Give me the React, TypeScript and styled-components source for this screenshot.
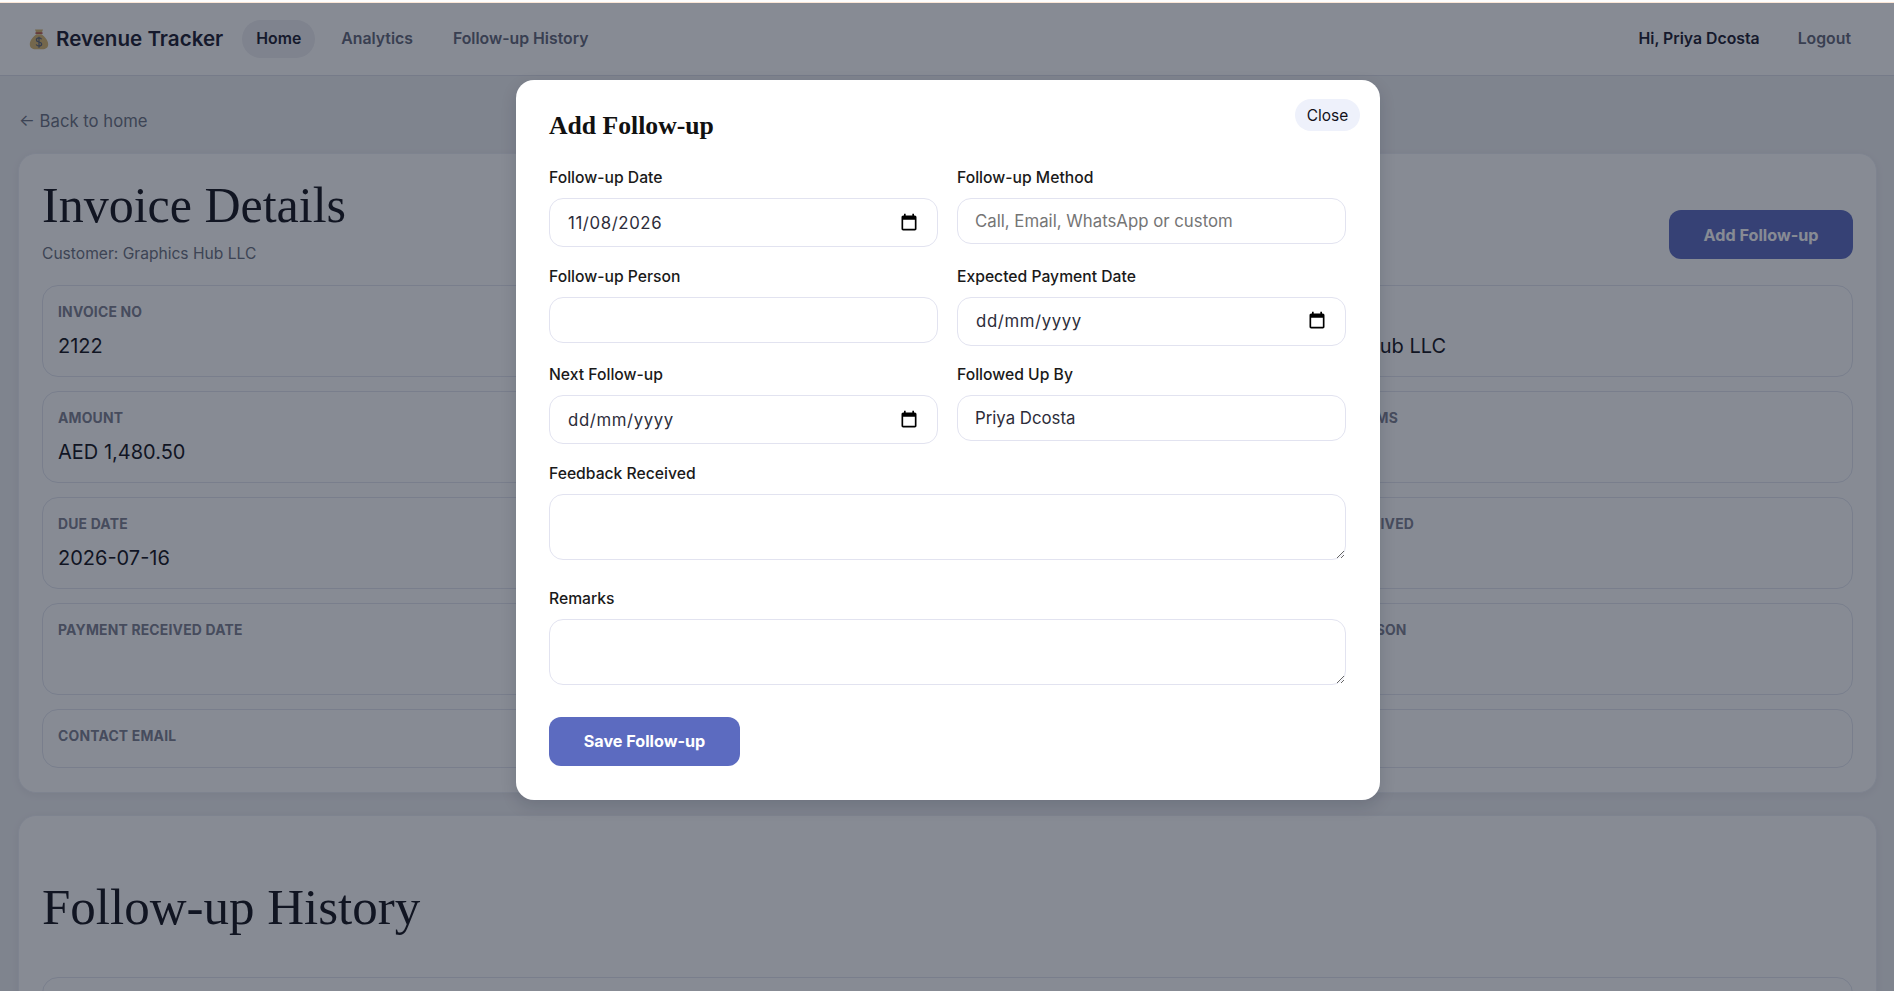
import styled, { createGlobalStyle } from "styled-components";

const GlobalStyle = createGlobalStyle`
    html, body {
        margin: 0;
        height: 100%;
        overflow: hidden;
        background: #eff0f3;
    }
    * {
        box-sizing: border-box;
    }
`;

const sans = `Inter, "Liberation Sans", sans-serif`;
const serif = `"Liberation Serif", "Times New Roman", serif`;

const TopStrip = styled.div`
    height: 3px;
    background: #fdfdfd;
    border-bottom: 1px solid #fbe6d6;
`;

const Page = styled.div`
    position: relative;
    height: 988px;
    overflow: hidden;
    font-family: ${sans};
    color: #12121a;
`;

const Nav = styled.nav`
    height: 73px;
    padding: 0 29px 1px 29px;
    display: flex;
    align-items: center;
    background: #ffffff;
    border-bottom: 1px solid #dcdee8;
`;

const Brand = styled.div`
    display: flex;
    align-items: center;
    gap: 7px;
    margin-right: 19px;
    font-size: 20.6px;
    font-weight: 600;
    color: #1a1a2e;
`;

const NavLinks = styled.div`
    display: flex;
    gap: 12px;
`;

const NavLink = styled.a<{ $active?: boolean }>`
    padding: 0 14px;
    height: 38px;
    display: flex;
    align-items: center;
    border-radius: 19px;
    font-size: 15.8px;
    font-weight: 600;
    color: ${props => (props.$active ? "#1a1a2e" : "#626678")};
    background: ${props => (props.$active ? "#eeeef2" : "transparent")};
`;

const NavRight = styled.div`
    margin-left: auto;
    display: flex;
    align-items: center;
    gap: 24px;
`;

const Greeting = styled.span`
    font-size: 15.8px;
    font-weight: 600;
    color: #1a1a2e;
`;

const Main = styled.main`
    padding: 33px 17px 0 18px;
`;

const BackLink = styled.a`
    display: block;
    height: 24px;
    line-height: 24px;
    margin: 0 0 20px 1px;
    font-size: 16.7px;
    color: #6b7080;
`;

const Card = styled.section`
    background: #ffffff;
    border: 1px solid #eceef5;
    border-radius: 18px;
    padding: 21px 23px 24px 23px;
    box-shadow: 0 2px 8px rgba(26, 26, 46, 0.06);
    & + & {
        margin-top: 22px;
    }
`;

const CardHeader = styled.div`
    display: flex;
    align-items: flex-end;
    justify-content: space-between;
    margin-bottom: 20px;
`;

const PageTitle = styled.h1`
    margin: 0;
    height: 60px;
    font-family: ${serif};
    font-weight: 400;
    font-size: 50px;
    line-height: 60px;
    color: #12121a;
`;

const Customer = styled.p`
    margin: 8px 0 0;
    font-size: 15.6px;
    line-height: 22px;
    color: #6b7080;
`;

const PrimaryButton = styled.button`
    height: 49px;
    border: none;
    border-radius: 12px;
    background: #5c6bc0;
    color: #ffffff;
    font-family: ${sans};
    font-size: 16.2px;
    font-weight: 700;
`;

const HeaderButton = styled(PrimaryButton)`
    width: 184px;
    margin-bottom: 6px;
`;

const InfoGrid = styled.div`
    display: grid;
    grid-template-columns: repeat(3, 1fr);
    gap: 14px;
`;

const InfoBox = styled.div`
    border: 1px solid #e2e5ef;
    border-radius: 16px;
    padding: 16px 15px 14px;
`;

const InfoLabel = styled.div`
    font-size: 13.9px;
    font-weight: 700;
    line-height: 20px;
    text-transform: uppercase;
    letter-spacing: 0.2px;
    color: #7d8090;
`;

const InfoValue = styled.div`
    margin-top: 9px;
    font-size: 20px;
    line-height: 31px;
    color: #12121a;
    &:empty {
        margin-top: 7px;
        line-height: 0;
    }
`;

const HistoryTitle = styled(PageTitle)`
    margin: 40px 0 40px;
    font-size: 51px;
`;

const HistoryBox = styled.div`
    height: 120px;
    border: 1px solid #e2e5ef;
    border-radius: 16px;
`;

const Overlay = styled.div`
    position: absolute;
    inset: 0;
    display: flex;
    justify-content: center;
    padding: 77px 0 0 2px;
    background: rgba(15, 23, 42, 0.5);
`;

const Modal = styled.div`
    position: relative;
    width: 864px;
    height: 720px;
    padding: 29px 34px 34px 33px;
    background: #ffffff;
    border-radius: 18px;
    box-shadow: 0 6px 16px rgba(15, 23, 42, 0.15);
`;

const CloseButton = styled.button`
    position: absolute;
    top: 19px;
    right: 20px;
    width: 65px;
    height: 32px;
    border: none;
    border-radius: 16px;
    background: #eef1fb;
    color: #12121a;
    font-family: ${sans};
    font-size: 15.5px;
`;

const ModalTitle = styled.h2`
    margin: 0 0 24px;
    font-family: ${serif};
    font-size: 25.7px;
    font-weight: 700;
    line-height: 34px;
    color: #111111;
`;

const FormGrid = styled.form`
    display: grid;
    grid-template-columns: 1fr 1fr;
    gap: 18.5px 19px;
`;

const Field = styled.div<{ $wide?: boolean }>`
    display: flex;
    flex-direction: column;
    gap: 9px;
    grid-column: ${props => (props.$wide ? "1 / -1" : "auto")};
`;

const Label = styled.label`
    font-size: 15.7px;
    font-weight: 500;
    line-height: 22px;
    color: #1a1a1a;
`;

const TextInput = styled.input`
    height: 46px;
    padding: 0 17px;
    border: 1px solid #e2e3f0;
    border-radius: 14px;
    outline: none;
    font-family: ${sans};
    font-size: 16.8px;
    color: #2d2d3a;
    background: #ffffff;
    &::placeholder {
        color: #757575;
    }
`;

const DateBox = styled.div`
    height: 49px;
    padding: 0 18px 0 18px;
    display: flex;
    align-items: center;
    justify-content: space-between;
    border: 1px solid #e2e3f0;
    border-radius: 14px;
    background: #ffffff;
`;

const DateText = styled.input`
    width: 200px;
    padding: 0;
    border: none;
    outline: none;
    font-family: ${sans};
    font-size: 16.8px;
    letter-spacing: 0.6px;
    color: #2d2d3a;
`;

const TextArea = styled.textarea`
    display: block;
    width: 100%;
    height: 66px;
    margin-bottom: 10px;
    padding: 12px 17px;
    border: 1px solid #e2e3f0;
    border-radius: 14px;
    outline: none;
    background: #ffffff;
    font-family: ${sans};
    font-size: 16px;
`;

const SaveButton = styled(PrimaryButton)`
    display: block;
    width: 191px;
    margin-top: 3px;
    grid-column: 1 / -1;
`;

function MoneyBag() {
    return (
        <svg width="20" height="22" viewBox="0 0 20 22" aria-hidden="true">
            <path d="M6 1.5h8l-1.6 4.2H7.600z" fill="#d8b66e" />
            <rect x="6.4" y="4.4" width="7.2" height="1.4" fill="#b5483f" />
            <path
                d="M7.400 6.200h5.200c3.200 2.400 6.600 6.200 6.600 10 0 3.600-2.600 5-5.600 5H6.400c-3 0-5.600-1.400-5.600-5 0-3.800 3.400-7.600 6.600-10z"
                fill="#d8b66e"
            />
            <path
                d="M12.600 11.200c-.5-.9-1.400-1.300-2.600-1.300-1.500 0-2.600.8-2.600 2s1 1.700 2.600 2.100 2.700.9 2.700 2.100-1.100 2-2.700 2c-1.300 0-2.300-.5-2.800-1.500M10 8.700v11"
                fill="none"
                stroke="#5a6478"
                strokeWidth="1.2"
            />
        </svg>
    );
}

function CalendarIcon() {
    return (
        <svg width="20" height="20" viewBox="0 0 24 24" aria-hidden="true">
            <path
                d="M19 3h-1V1h-2v2H8V1H6v2H5c-1.110 0-1.990.9-1.990 2L3 19c0 1.100.89 2 2 2h14c1.100 0 2-.9 2-2V5c0-1.100-.9-2-2-2zm0 16H5V8h14v11z"
                fill="#000000"
            />
        </svg>
    );
}

const details = [
    { label: "Invoice No", value: "2122" },
    { label: "Invoice Date", value: "2026-06-16" },
    { label: "Customer", value: "Graphics Hub LLC" },
    { label: "Amount", value: "AED 1,480.50" },
    { label: "Status", value: "Open" },
    { label: "Payment Terms", value: "" },
    { label: "Due Date", value: "2026-07-16" },
    { label: "Days Overdue", value: "0" },
    { label: "Amount Received", value: "" },
    { label: "Payment Received Date", value: "" },
    { label: "Sales Person", value: "Priya Dcosta" },
    { label: "Contact Person", value: "" },
    { label: "Contact Email", value: "" },
    { label: "Contact Phone", value: "" },
    { label: "Notes", value: "" },
];

function DateField({ label, value }: { label: string; value: string }) {
    return (
        <Field>
            <Label>{label}</Label>
            <DateBox>
                <DateText readOnly value={value} />
                <CalendarIcon />
            </DateBox>
        </Field>
    );
}

function App() {
    return (
        <>
            <GlobalStyle />
            <TopStrip />
            <Page>
                <Nav>
                    <Brand>
                        <MoneyBag />
                        Revenue Tracker
                    </Brand>
                    <NavLinks>
                        <NavLink $active>Home</NavLink>
                        <NavLink>Analytics</NavLink>
                        <NavLink>Follow-up History</NavLink>
                    </NavLinks>
                    <NavRight>
                        <Greeting>Hi, Priya Dcosta</Greeting>
                        <NavLink>Logout</NavLink>
                    </NavRight>
                </Nav>
                <Main>
                    <BackLink>← Back to home</BackLink>
                    <Card>
                        <CardHeader>
                            <div>
                                <PageTitle>Invoice Details</PageTitle>
                                <Customer>Customer: Graphics Hub LLC</Customer>
                            </div>
                            <HeaderButton>Add Follow-up</HeaderButton>
                        </CardHeader>
                        <InfoGrid>
                            {details.map(item => (
                                <InfoBox key={item.label}>
                                    <InfoLabel>{item.label}</InfoLabel>
                                    <InfoValue>{item.value}</InfoValue>
                                </InfoBox>
                            ))}
                        </InfoGrid>
                    </Card>
                    <Card>
                        <HistoryTitle>Follow-up History</HistoryTitle>
                        <HistoryBox />
                    </Card>
                </Main>
                <Overlay>
                    <Modal>
                        <CloseButton>Close</CloseButton>
                        <ModalTitle>Add Follow-up</ModalTitle>
                        <FormGrid>
                            <DateField label="Follow-up Date" value="11/08/2026" />
                            <Field>
                                <Label>Follow-up Method</Label>
                                <TextInput placeholder="Call, Email, WhatsApp or custom" />
                            </Field>
                            <Field>
                                <Label>Follow-up Person</Label>
                                <TextInput />
                            </Field>
                            <DateField label="Expected Payment Date" value="dd/mm/yyyy" />
                            <DateField label="Next Follow-up" value="dd/mm/yyyy" />
                            <Field>
                                <Label>Followed Up By</Label>
                                <TextInput readOnly value="Priya Dcosta" />
                            </Field>
                            <Field $wide>
                                <Label>Feedback Received</Label>
                                <TextArea />
                            </Field>
                            <Field $wide>
                                <Label>Remarks</Label>
                                <TextArea />
                            </Field>
                            <SaveButton type="button">Save Follow-up</SaveButton>
                        </FormGrid>
                    </Modal>
                </Overlay>
            </Page>
        </>
    );
}

export default App;
